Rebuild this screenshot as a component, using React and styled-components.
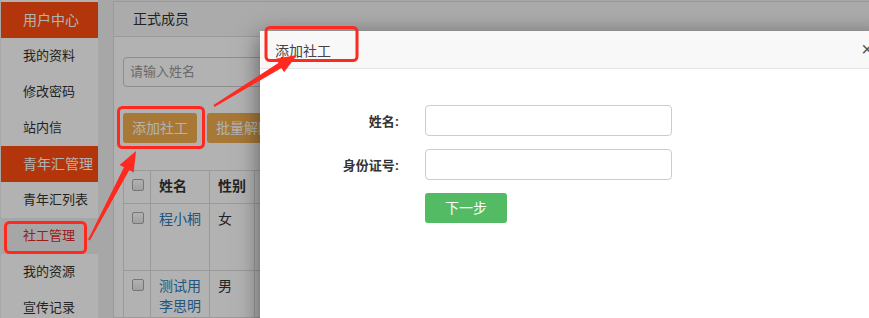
import React from "react";
import styled, { createGlobalStyle } from "styled-components";

const GlobalStyle = createGlobalStyle`
  html, body {
    margin: 0;
    padding: 0;
    background: #f0f0f0;
    font-family: "Liberation Sans", "Noto Sans CJK SC", sans-serif;
    color: #333;
  }
  * { box-sizing: border-box; }
`;

// 整个页面
const Page = styled.div`
  position: relative;
  display: flex;
  width: 869px;
  height: 318px;
  overflow: hidden;
  background: #f0f0f0;
`;

// 左侧菜单
const Sidebar = styled.div`
  width: 97px;
  margin-left: 1px;
  padding-top: 2px;
  background: #fff;
  flex-shrink: 0;
`;

const SideHeader = styled.div`
  height: 36px;
  line-height: 36px;
  padding-left: 22px;
  background: #ff4d10;
  color: #fff;
  font-size: 14px;
`;

const SideItem = styled.div`
  height: 36px;
  line-height: 36px;
  padding-left: 22px;
  font-size: 13px;
  color: ${(p) => (p.$active ? "#e02a2a" : "#333")};
  background: ${(p) => (p.$active ? "#eeeeee" : "#fff")};
`;

// 右侧内容
const Main = styled.div`
  flex: 1;
  margin-left: 15px;
  margin-top: 1px;
  background: #fff;
  border: 1px solid #ddd;
  border-right: none;
`;

const PanelHeading = styled.div`
  height: 35px;
  line-height: 34px;
  padding-left: 19px;
  background: #f5f5f5;
  border-bottom: 1px solid #ddd;
  font-size: 14px;
`;

const PanelBody = styled.div`
  padding: 20px 0 0 9px;
`;

const SearchInput = styled.div`
  width: 220px;
  height: 30px;
  line-height: 28px;
  padding-left: 6px;
  border: 1px solid #ccc;
  border-radius: 4px;
  font-size: 13px;
  color: #999;
`;

const ButtonRow = styled.div`
  display: flex;
  gap: 10px;
  margin-top: 26px;
`;

const WarnButton = styled.div`
  height: 30px;
  line-height: 30px;
  padding: 0 9px;
  border-radius: 3px;
  background: #f0ad4e;
  color: #fff;
  font-size: 14px;
`;

const Table = styled.table`
  margin-top: 27px;
  border-collapse: collapse;
  table-layout: fixed;
  font-size: 14px;
`;

const Cell = styled.td`
  border: 1px solid #ddd;
  padding: ${(p) => (p.$check ? "5px 6px" : "5px 8px")};
  vertical-align: top;
  width: ${(p) => p.$w}px;
  height: ${(p) => p.$h || 0}px;
  font-weight: ${(p) => (p.$head ? "bold" : "normal")};
  line-height: 20px;
`;

const NameLink = styled.span`
  color: #337ab7;
`;

const Check = styled.span`
  display: inline-block;
  width: 12px;
  height: 12px;
  margin: 3px 0 0 2px;
  border: 1px solid #aaa;
  border-radius: 2px;
  background: linear-gradient(#fff, #e6e6e6);
`;

// 遮罩
const Backdrop = styled.div`
  position: absolute;
  inset: 0;
  background: rgba(0, 0, 0, 0.3);
`;

// 弹窗
const Modal = styled.div`
  position: absolute;
  left: 260px;
  top: 31px;
  width: 628px;
  height: 320px;
  background: #fff;
  box-shadow: 0 5px 22px rgba(0, 0, 0, 0.5);
`;

const ModalHeader = styled.div`
  display: flex;
  justify-content: space-between;
  align-items: center;
  height: 38px;
  padding: 0 15px;
  background: #f8f8f8;
  border-bottom: 1px solid #e5e5e5;
  font-size: 14px;
  color: #444;
`;

const Close = styled.span`
  font-size: 20px;
  color: #555;
`;

const Form = styled.div`
  display: grid;
  grid-template-columns: 139px 247px;
  column-gap: 26px;
  row-gap: 13px;
  padding-top: 36px;
  align-items: center;
`;

const Label = styled.div`
  text-align: right;
  font-size: 13px;
  font-weight: bold;
  color: #333;
`;

const TextInput = styled.div`
  height: 31px;
  border: 1px solid #ccc;
  border-radius: 4px;
`;

const NextButton = styled.div`
  grid-column: 2;
  width: 82px;
  height: 30px;
  line-height: 30px;
  text-align: center;
  border-radius: 3px;
  background: #52bb64;
  color: #fff;
  font-size: 14px;
`;

// 红色标注层
const Marks = styled.svg`
  position: absolute;
  left: 0;
  top: 0;
`;

const arrowPoints = (tx, ty, px, py) => {
  const dx = px - tx;
  const dy = py - ty;
  const len = Math.hypot(dx, dy);
  const ux = dx / len;
  const uy = dy / len;
  const nx = -uy;
  const ny = ux;
  const headLen = 20;
  const bx = px - ux * headLen;
  const by = py - uy * headLen;
  const pt = (x, y, w) => [x + nx * w, y + ny * w];
  const pts = [
    pt(tx, ty, 1),
    pt(bx, by, 3),
    pt(bx, by, 8),
    [px, py],
    pt(bx, by, -8),
    pt(bx, by, -3),
    pt(tx, ty, -1),
  ];
  return pts.map((p) => p.map((v) => v.toFixed(1)).join(",")).join(" ");
};

const App = () => {
  return (
    <>
      <GlobalStyle />
      <Page>
        <Sidebar>
          <SideHeader>用户中心</SideHeader>
          <SideItem>我的资料</SideItem>
          <SideItem>修改密码</SideItem>
          <SideItem>站内信</SideItem>
          <SideHeader>青年汇管理</SideHeader>
          <SideItem>青年汇列表</SideItem>
          <SideItem $active>社工管理</SideItem>
          <SideItem>我的资源</SideItem>
          <SideItem>宣传记录</SideItem>
        </Sidebar>
        <Main>
          <PanelHeading>正式成员</PanelHeading>
          <PanelBody>
            <SearchInput>请输入姓名</SearchInput>
            <ButtonRow>
              <WarnButton>添加社工</WarnButton>
              <WarnButton>批量解除</WarnButton>
            </ButtonRow>
            <Table>
              <tbody>
                <tr>
                  <Cell $w={27} $h={33} $check $head><Check /></Cell>
                  <Cell $w={59} $head>姓名</Cell>
                  <Cell $w={45} $head>性别</Cell>
                  <Cell $w={120} $head>身份证号</Cell>
                </tr>
                <tr>
                  <Cell $w={27} $h={67} $check><Check /></Cell>
                  <Cell $w={59}><NameLink>程小桐</NameLink></Cell>
                  <Cell $w={45}>女</Cell>
                  <Cell $w={120}></Cell>
                </tr>
                <tr>
                  <Cell $w={27} $h={67} $check><Check /></Cell>
                  <Cell $w={59}><NameLink>测试用李思明</NameLink></Cell>
                  <Cell $w={45}>男</Cell>
                  <Cell $w={120}></Cell>
                </tr>
              </tbody>
            </Table>
          </PanelBody>
        </Main>
        <Backdrop />
        <Modal>
          <ModalHeader>
            <span>添加社工</span>
            <Close>×</Close>
          </ModalHeader>
          <Form>
            <Label>姓名:</Label>
            <TextInput />
            <Label>身份证号:</Label>
            <TextInput />
            <NextButton>下一步</NextButton>
          </Form>
        </Modal>
        <Marks width="869" height="318" viewBox="0 0 869 318">
          <g fill="none" stroke="#ff2a1f" strokeWidth="3">
            <rect x="266" y="27.5" width="91" height="33" rx="4" />
            <rect x="118.5" y="107.5" width="85" height="40" rx="4" />
            <rect x="5.5" y="222.5" width="80" height="30" rx="4" />
          </g>
          <g fill="#ff2a1f">
            <polygon points={arrowPoints(89, 240, 136, 151)} />
            <polygon points={arrowPoints(214, 106, 297, 55)} />
          </g>
        </Marks>
      </Page>
    </>
  );
};

export default App;
